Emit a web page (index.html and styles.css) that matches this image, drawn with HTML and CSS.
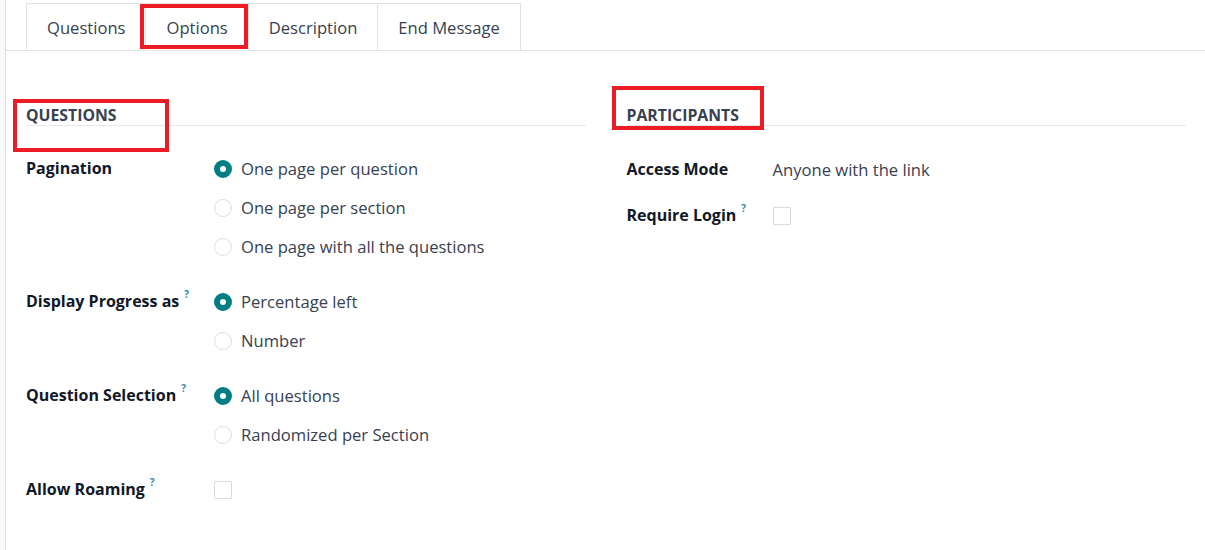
FILE: index.html
```html
<!DOCTYPE html>
<html>
<head>
<meta charset="utf-8">
<link rel="stylesheet" href="styles.css">
</head>
<body>
<div class="sheet">
  <ul class="tabs">
    <li class="tab">Questions</li>
    <li class="tab active">Options</li>
    <li class="tab">Description</li>
    <li class="tab">End Message</li>
  </ul>
  <div class="form">
    <section class="group">
      <h2 class="group-title">Questions</h2>
      <div class="fields left">
        <div class="field">
          <div class="label">Pagination</div>
          <div class="radios">
            <div class="radio checked"><span class="dot"></span>One page per question</div>
            <div class="radio"><span class="dot"></span>One page per section</div>
            <div class="radio"><span class="dot"></span>One page with all the questions</div>
          </div>
        </div>
        <div class="field">
          <div class="label">Display Progress as<sup class="help">?</sup></div>
          <div class="radios">
            <div class="radio checked"><span class="dot"></span>Percentage left</div>
            <div class="radio"><span class="dot"></span>Number</div>
          </div>
        </div>
        <div class="field">
          <div class="label">Question Selection<sup class="help">?</sup></div>
          <div class="radios">
            <div class="radio checked"><span class="dot"></span>All questions</div>
            <div class="radio"><span class="dot"></span>Randomized per Section</div>
          </div>
        </div>
        <div class="field">
          <div class="label">Allow Roaming<sup class="help">?</sup></div>
          <div class="radios">
            <div class="radio"><span class="check"></span></div>
          </div>
        </div>
      </div>
    </section>
    <section class="group">
      <h2 class="group-title">Participants</h2>
      <div class="fields right">
        <div class="field small">
          <div class="label">Access Mode</div>
          <div class="value">Anyone with the link</div>
        </div>
        <div class="field small">
          <div class="label">Require Login<sup class="help">?</sup></div>
          <div class="value"><span class="check"></span></div>
        </div>
      </div>
    </section>
  </div>
  <div class="annot annot-tab"></div>
  <div class="annot annot-questions"></div>
  <div class="annot annot-participants"></div>
</div>
</body>
</html>
```

FILE: styles.css
```css
* { box-sizing: border-box; }
html, body { margin: 0; padding: 0; }
body {
  background: #f8f9fa;
  font-family: "Open Sans", "Noto Sans", sans-serif;
  font-size: 16.6px;
  color: #374151;
}
.sheet {
  position: relative;
  margin-left: 5px;
  border-left: 1px solid #d8dadd;
  background: #fff;
  height: 550px;
  padding-top: 3px;
}
.tabs {
  list-style: none;
  margin: 0;
  padding: 0 0 0 20px;
  display: flex;
  border-bottom: 1px solid #dee2e6;
}
.tab {
  height: 47px;
  display: flex;
  align-items: center;
  padding: 0 20px;
  border: 1px solid #dee2e6;
  border-bottom: none;
  margin-left: -1px;
  color: #374151;
  font-size: 16.6px;
}
.tab:first-child { margin-left: 0; }
.form {
  display: grid;
  grid-template-columns: 1fr 1fr;
  column-gap: 41px;
  padding: 0 19px 0 20px;
}
.group-title {
  margin: 54px 0 0;
  font-size: 15.8px;
  line-height: 20px;
  font-weight: 700;
  text-transform: uppercase;
  color: #374151;
  border-bottom: 1px solid #e5e7eb;
}
.fields.left { margin-top: 23px; }
.fields.right { margin-top: 28px; }
.field {
  display: grid;
  grid-template-columns: 188px 1fr;
  margin-bottom: 16px;
}
.fields.right .field { grid-template-columns: 146px 1fr; }
.label {
  font-weight: 700;
  font-size: 16px;
  color: #111827;
  line-height: 39px;
  white-space: nowrap;
}
.field.small .label, .field.small .value {
  line-height: 30px;
  height: 30px;
}
.field.small .value {
  display: flex;
  align-items: center;
  padding-top: 2px;
}
.help {
  color: #2b8bb0;
  font-size: 10px;
  font-weight: 700;
  margin-left: 5px;
  vertical-align: top;
  position: relative;
  top: -7px;
}
.radios { display: flex; flex-direction: column; }
.radio {
  height: 39px;
  display: flex;
  align-items: center;
  gap: 9px;
}
.dot {
  width: 18px;
  height: 18px;
  border-radius: 50%;
  border: 1px solid #dcdee2;
  background: #fff;
  flex: none;
}
.radio.checked .dot {
  border: 6px solid #017e84;
  background: #fff;
}
.check {
  width: 18px;
  height: 18px;
  border: 1px solid #d8dadd;
  border-radius: 1px;
  background: #fff;
  display: inline-block;
}
.annot {
  position: absolute;
  border: 4px solid #ed1c24;
}
.annot-tab { left: 134px; top: 4px; width: 108px; height: 45px; }
.annot-questions { left: 7px; top: 99px; width: 156px; height: 53px; }
.annot-participants { left: 606px; top: 86px; width: 152px; height: 44px; }
```
